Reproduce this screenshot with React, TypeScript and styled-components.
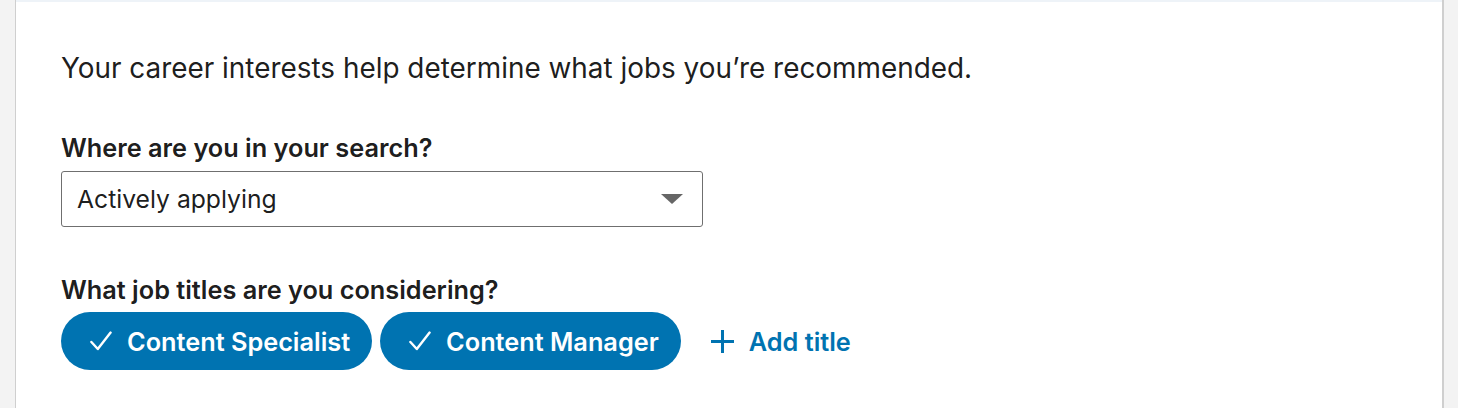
import React from "react";
import styled, { createGlobalStyle } from "styled-components";

const Global = createGlobalStyle`
  html, body { margin: 0; padding: 0; background: #f3f3f3; }
  body { font-family: Inter, "Noto Sans", "Liberation Sans", sans-serif; -webkit-font-smoothing: antialiased; }
`;

const Page = styled.div`
  display: flex;
  height: 408px;
  padding-left: 15px;
  padding-right: 14px;
`;

const Card = styled.section`
  flex: 1;
  background: #fff;
  border-left: 1px solid #cfcfcf;
  border-right: 2px solid #cfcfcf;
  display: flex;
  flex-direction: column;
`;

const TopStrip = styled.div`
  height: 2px;
  background: #eef3f8;
`;

const Body = styled.div`
  padding: 50px 0 0 45px;
  display: flex;
  flex-direction: column;
`;

const Intro = styled.p`
  margin: 0;
  font-size: 27.9px;
  line-height: 32px;
  color: rgba(0, 0, 0, 0.9);
`;

const Label = styled.h3<{ $top: number }>`
  margin: ${(p) => p.$top}px 0 0;
  font-size: 25.3px;
  line-height: 28px;
  font-weight: 600;
  color: rgba(0, 0, 0, 0.9);
`;

const Select = styled.div`
  margin-top: 9px;
  width: 642px;
  height: 56px;
  box-sizing: border-box;
  border: 1px solid #6f6f6f;
  border-radius: 3px;
  display: flex;
  align-items: center;
  justify-content: space-between;
  padding: 0 19px 0 15px;
  font-size: 24.7px;
  color: rgba(0, 0, 0, 0.9);
`;

const Caret = styled.span`
  width: 0;
  height: 0;
  border-left: 11px solid transparent;
  border-right: 11px solid transparent;
  border-top: 10px solid #666;
`;

const Chips = styled.div`
  margin-top: 8px;
  display: flex;
  align-items: center;
  gap: 8px;
`;

const Chip = styled.button`
  height: 58px;
  border: none;
  border-radius: 29px;
  background: #0073b1;
  color: #fff;
  font-family: inherit;
  font-size: 25.3px;
  font-weight: 600;
  padding: 0 22px 0 29px;
  display: flex;
  align-items: center;
  gap: 15px;
  cursor: pointer;
`;

const AddButton = styled.button`
  margin-left: 22px;
  border: none;
  background: none;
  color: #0073b1;
  font-family: inherit;
  font-size: 25.3px;
  font-weight: 600;
  display: flex;
  align-items: center;
  gap: 15px;
  padding: 0;
  cursor: pointer;
`;

const Check = () => (
  <svg width="22" height="20" viewBox="0 0 22 20" fill="none">
    <path d="M1.4 11 L7.8 18 L20.6 1.6" stroke="#fff" strokeWidth="2.4" strokeLinecap="round" strokeLinejoin="round" />
  </svg>
);

const Plus = () => (
  <svg width="23" height="23" viewBox="0 0 23 23">
    <path d="M11.5 0 V23 M0 11.5 H23" stroke="#0073b1" strokeWidth="3" />
  </svg>
);

export default function App() {
  return (
    <>
      <Global />
      <Page>
        <Card>
          <TopStrip />
          <Body>
            <Intro>Your career interests help determine what jobs you’re recommended.</Intro>
            <Label $top={50}>Where are you in your search?</Label>
            <Select>
              <span>Actively applying</span>
              <Caret />
            </Select>
            <Label $top={49}>What job titles are you considering?</Label>
            <Chips>
              <Chip>
                <Check />
                Content Specialist
              </Chip>
              <Chip>
                <Check />
                Content Manager
              </Chip>
              <AddButton>
                <Plus />
                Add title
              </AddButton>
            </Chips>
          </Body>
        </Card>
      </Page>
    </>
  );
}
